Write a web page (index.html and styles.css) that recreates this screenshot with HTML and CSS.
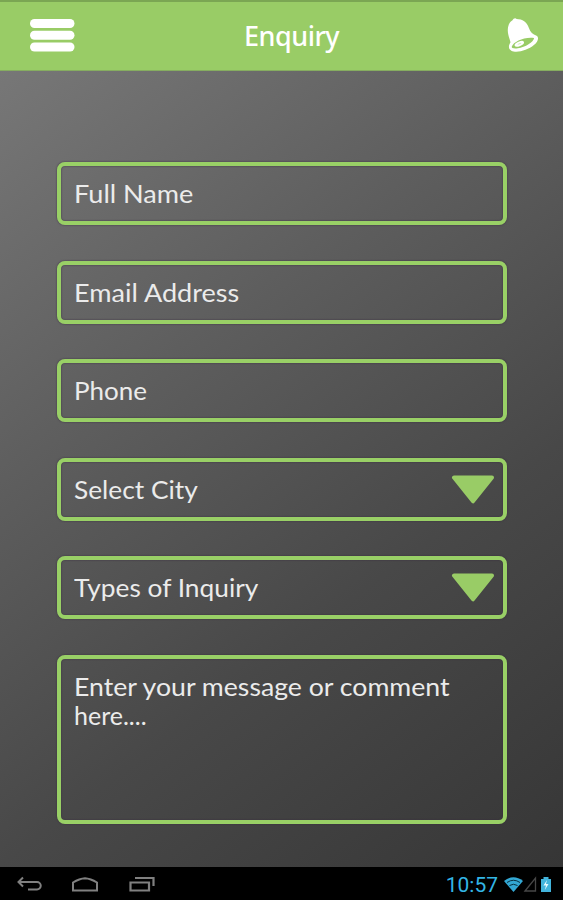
FILE: index.html
```html
<!DOCTYPE html>
<html lang="en">
<head>
<meta charset="utf-8">
<title>Enquiry</title>
<link rel="stylesheet" href="styles.css">
</head>
<body>
<header class="bar">
  <svg class="menu" width="45" height="33" viewBox="0 0 45 33"><g fill="#fff"><rect width="44.500" height="9" rx="4.5"/><rect y="11.8" width="44.500" height="9" rx="4.5"/><rect y="23.5" width="44.500" height="9" rx="4.5"/></g></svg>
  <h1 class="title">Enquiry</h1>
  <svg class="bell" width="32" height="36" viewBox="0 0 32 36"><path fill="#fff" d="M5.500 3.200C6.400 1.500 8.300.2 9.600 2c5.800 0 10.400 3.300 12.200 8.800 1.500 4.400 4 6.600 7.800 8 2.600 1.600 1.600 5.600-2.700 9.300-6.100 5.200-17.400 8.500-22.600 5.600-3-1.700-3.100-4.700-.8-8.500C1.200 18 .2 14.800 1.100 10 1.700 7 3 4.700 5.500 3.200z"/><path fill="#99cc66" d="M4.800 29.500c1.800-4.700 12.300-9.900 22.300-8.500-.4 4-9 9.300-16.200 10.300-4 .5-6.800-.1-6.100-1.800z"/><ellipse cx="12.300" cy="26.800" rx="5" ry="2.300" transform="rotate(-22 12.300 26.800)" fill="#fff"/><ellipse cx="12.500" cy="26.800" rx="2" ry=".5" transform="rotate(-22 12.500 26.800)" fill="#d5ebbf"/></svg>
</header>
<main class="form">
  <div class="field"><span class="label t-name">Full Name</span></div>
  <div class="field"><span class="label t-email">Email Address</span></div>
  <div class="field"><span class="label t-phone">Phone</span></div>
  <div class="field"><span class="label t-city">Select City</span><svg class="arrow" width="44" height="29" viewBox="0 0 44 29"><path d="M3 2.500H41L22 26.300z" fill="#99cc66" stroke="#99cc66" stroke-width="4" stroke-linejoin="round"/></svg></div>
  <div class="field"><span class="label t-type">Types of Inquiry</span><svg class="arrow" width="44" height="29" viewBox="0 0 44 29"><path d="M3 2.500H41L22 26.300z" fill="#99cc66" stroke="#99cc66" stroke-width="4" stroke-linejoin="round"/></svg></div>
  <div class="field message"><span class="label t-msg">Enter your message or comment</span><span class="label">here....</span></div>
</main>
<footer class="system">
  <svg class="nav" width="140" height="18" viewBox="0 0 140 18" fill="none" stroke="#808080" stroke-width="2"><path d="M6 1.500 1.500 6 6 10.500M2 6H20a3.500 3.500 0 0 1 0 7.500H11"/><path d="M56 14.500V6.500Q62.500 2.500 68 2.200 73.500 2.500 80 6.500V14.500z"/><path d="M113.500 14.500V6.500H132V14.500zM118 2H136.500V10" stroke-width="2.200"/></svg>
  <span class="clock">10:57</span>
  <svg class="status" width="48" height="17" viewBox="0 0 48 17"><path fill="#33a8d4" d="M0 5Q9.500-2.500 19 5L9.500 16z"/><path d="M3 6.500Q9.500 2 16 6.500M5.500 9.500Q9.500 7 13.500 9.500" fill="none" stroke="#073142"/><path d="M21 15 31.500 2V15z" fill="none" stroke="#474747" stroke-width="1.300"/><path fill="#42b4dc" d="M37 3h2.500V1h5v2H47v13H37z"/><path fill="#e7faff" d="M43 4 39.500 9.500H42L40.800 14 44.500 8H42z"/></svg>
</footer>
</body>
</html>
```
FILE: styles.css
```css
* { box-sizing: border-box; }
body {
  margin: 0;
  width: 563px;
  height: 900px;
  display: flex;
  flex-direction: column;
  overflow: hidden;
  background: #000;
  font-family: Lato, sans-serif;
}
.bar {
  height: 71px;
  flex: none;
  display: grid;
  grid-template-columns: 214px 1fr auto;
  padding: 0 24px 0 30px;
  align-items: center;
  background: #99cc66;
  border-top: 2px solid #7ba653;
  border-bottom: 1px solid #86ad60;
}
.menu { margin-top: -1px; }
.title {
  margin: 0;
  color: #fff;
  font: 500 27px/40px "Noto Sans", sans-serif;
  letter-spacing: -0.5px;
}
.bell { margin-top: -2px; }
.form {
  flex: 1;
  display: flex;
  flex-direction: column;
  gap: 35.5px;
  padding: 91px 56px 0 57px;
  background: linear-gradient(143deg, #777 0%, #5d5d5d 35%, #484848 65%, #363636 100%);
}
.field {
  height: 63px;
  flex: none;
  display: flex;
  align-items: center;
  justify-content: space-between;
  padding: 0 8px 0 13px;
  border: 4px solid #99d066;
  border-radius: 8px;
  box-shadow: 0 0 2px #392c40, inset 0 0 2px #392c40;
  color: #ebebeb;
  font-size: 25px;
  line-height: 29px;
  white-space: nowrap;
}
.label { transform-origin: left center; }
.t-name { transform: scaleX(1.083); }
.t-email { transform: scaleX(1.083); }
.t-phone { transform: scaleX(1.04); }
.t-city { transform: scaleX(1.052); }
.t-type { transform: scaleX(1.052); }
.t-msg { transform: scaleX(1.066); }
.message {
  height: 169px;
  flex-direction: column;
  align-items: flex-start;
  justify-content: flex-start;
  padding-top: 13.500px;
}
.system {
  height: 33px;
  flex: none;
  display: flex;
  align-items: center;
  padding: 2px 11px 0 17px;
  background: #000;
}
.clock {
  margin-left: auto;
  margin-right: 6px;
  color: #33b5e5;
  font: 21px/28px Roboto, sans-serif;
}
```
